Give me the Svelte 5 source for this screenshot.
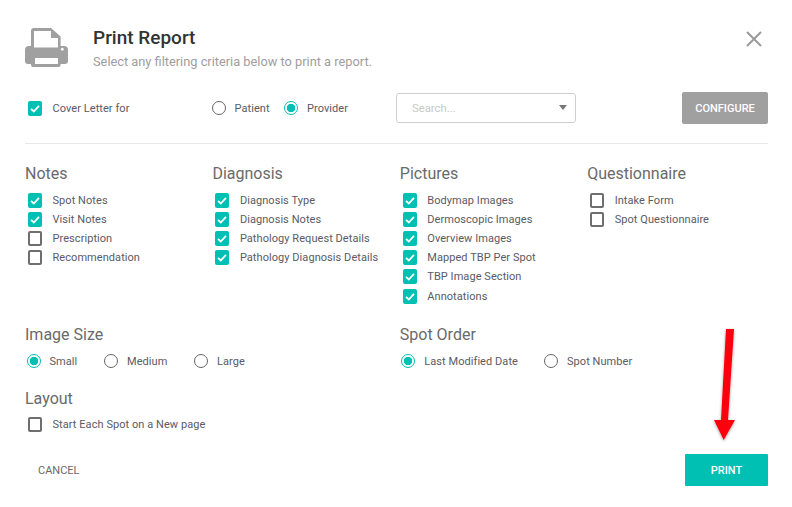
<script>
	const groups = [
		{
			title: 'Notes',
			items: [
				{ label: 'Spot Notes', on: true },
				{ label: 'Visit Notes', on: true },
				{ label: 'Prescription', on: false },
				{ label: 'Recommendation', on: false }
			]
		},
		{
			title: 'Diagnosis',
			items: [
				{ label: 'Diagnosis Type', on: true },
				{ label: 'Diagnosis Notes', on: true },
				{ label: 'Pathology Request Details', on: true },
				{ label: 'Pathology Diagnosis Details', on: true }
			]
		},
		{
			title: 'Pictures',
			items: [
				{ label: 'Bodymap Images', on: true },
				{ label: 'Dermoscopic Images', on: true },
				{ label: 'Overview Images', on: true },
				{ label: 'Mapped TBP Per Spot', on: true },
				{ label: 'TBP Image Section', on: true },
				{ label: 'Annotations', on: true }
			]
		},
		{
			title: 'Questionnaire',
			items: [
				{ label: 'Intake Form', on: false },
				{ label: 'Spot Questionnaire', on: false }
			]
		}
	];
</script>

{#snippet check(label, on)}
	<div class="check">
		<span class="box" class:on>
			{#if on}
				<svg width="14" height="15" viewBox="0 0 14 15"><path d="M3 7.800l2.800 2.700 5.200-5.600" fill="none" stroke="#fff" stroke-width="1.800" /></svg>
			{/if}
		</span>
		<span>{label}</span>
	</div>
{/snippet}

{#snippet radio(label, on, cls)}
	<div class="radio {cls}">
		<span class="dot" class:on></span>
		<span>{label}</span>
	</div>
{/snippet}

<div class="dialog">
	<header class="head">
		<svg class="printer" width="43" height="39" viewBox="0 0 43 39">
			<path fill="#a0a0a0" fill-rule="evenodd" d="M6 3a3 3 0 0 1 3-3h17l9.600 8.500V18H39a4 4 0 0 1 4 4v11a3 3 0 0 1-3 3h-4.400v1a2 2 0 0 1-2 2H8a2 2 0 0 1-2-2v-1H3a3 3 0 0 1-3-3V22a4 4 0 0 1 4-4h2zM9 3v16.500h24V10h-7V3zM10 30v6h23v-6zM37.300 19.800a1.500 1.500 0 1 0 .01 0z" />
		</svg>
		<div class="titles">
			<h1>Print Report</h1>
			<p>Select any filtering criteria below to print a report.</p>
		</div>
		<svg class="close" width="18" height="18" viewBox="0 0 18 18"><path d="M2 2l14 14M16 2L2 16" stroke="#9a9a9a" stroke-width="2" fill="none" /></svg>
	</header>

	<div class="cover">
		<div class="cover-check">{@render check('Cover Letter for', true)}</div>
		<div class="cover-radios">
			{@render radio('Patient', false, 'patient')}
			{@render radio('Provider', true, '')}
		</div>
		<div class="select">
			<span>Search...</span>
			<i class="caret"></i>
		</div>
		<button class="configure">CONFIGURE</button>
	</div>

	<div class="groups">
		{#each groups as group}
			<section>
				<h2>{group.title}</h2>
				{#each group.items as item}
					{@render check(item.label, item.on)}
				{/each}
			</section>
		{/each}
	</div>

	<div class="options">
		<section>
			<h2>Image Size</h2>
			<div class="radios">
				{@render radio('Small', true, 'small')}
				{@render radio('Medium', false, 'medium')}
				{@render radio('Large', false, '')}
			</div>
		</section>
		<section>
			<h2>Spot Order</h2>
			<div class="radios">
				{@render radio('Last Modified Date', true, 'modified')}
				{@render radio('Spot Number', false, '')}
			</div>
		</section>
	</div>

	<section class="layout">
		<h2>Layout</h2>
		{@render check('Start Each Spot on a New page', false)}
	</section>

	<footer class="foot">
		<button class="cancel">CANCEL</button>
		<button class="print">PRINT</button>
	</footer>

	<svg class="arrow" width="40" height="125" viewBox="0 0 40 125">
		<defs>
			<filter id="shadow" x="-30%" y="-10%" width="160%" height="120%">
				<feDropShadow dx="0" dy="1" stdDeviation="1.500" flood-color="#000" flood-opacity="0.4" />
			</filter>
		</defs>
		<path d="M19 4h8L21 95h7L16.700 115 7 95h7z" fill="#fc0011" filter="url(#shadow)" />
	</svg>
</div>

<style>
	:global(body) {
		margin: 0;
		background: #fff;
		font-family: Roboto, sans-serif;
		color: #5a5a64;
	}

	.dialog {
		position: relative;
		width: 792px;
		height: 507px;
		box-sizing: border-box;
		padding: 28px 24px 0 25px;
		overflow: hidden;
	}

	.head {
		display: flex;
		align-items: flex-start;
		height: 64px;
	}

	.printer {
		flex: none;
	}

	.titles {
		margin-left: 25px;
		flex: 1;
	}

	h1 {
		margin: 0;
		font-size: 19px;
		line-height: 20px;
		font-weight: 500;
		color: #333;
	}

	.titles p {
		margin: 6px 0 0;
		font-size: 12.800px;
		line-height: 16px;
		color: #9e9e9e;
	}

	.close {
		margin: 2px 4.600px 0 0;
	}

	.cover {
		display: flex;
		align-items: center;
		height: 32px;
		padding-bottom: 19px;
		border-bottom: 1px solid #e8e8e8;
	}

	.cover-check {
		width: 186.500px;
	}

	.cover-radios {
		display: flex;
		width: 184.500px;
		font-size: 11px;
	}

	.patient {
		width: 72.500px;
	}

	.select {
		box-sizing: border-box;
		display: flex;
		align-items: center;
		justify-content: space-between;
		width: 180px;
		height: 30px;
		padding: 0 8px 0 15px;
		border: 1px solid #cfcfcf;
		border-radius: 3px;
		font-size: 11.300px;
		color: #c8c8c8;
	}

	.caret {
		width: 0;
		height: 0;
		margin-bottom: 1px;
		border-left: 4.500px solid transparent;
		border-right: 4.500px solid transparent;
		border-top: 5px solid #777;
	}

	button {
		border: 0;
		padding: 0;
		font-family: inherit;
	}

	.configure {
		margin-left: auto;
		width: 86px;
		height: 32px;
		border-radius: 2px;
		background: #a0a0a0;
		color: #fff;
		font-size: 11px;
		font-weight: 500;
	}

	.check {
		display: flex;
		align-items: center;
		height: 19px;
		padding-left: 3px;
		font-size: 11px;
		letter-spacing: 0.060px;
		color: #5a5a64;
	}

	.groups .check:nth-child(7) {
		margin-top: 1px;
	}

	.box {
		box-sizing: border-box;
		flex: none;
		width: 14px;
		height: 15px;
		margin-right: 10.500px;
		border: 2px solid #6e6e6e;
		border-radius: 2px;
	}

	.box.on {
		border: 0;
		background: #00bfb3;
	}

	.box svg {
		display: block;
	}

	.radio {
		display: flex;
		align-items: center;
		font-size: 11px;
		letter-spacing: 0.060px;
	}

	.dot {
		box-sizing: border-box;
		flex: none;
		width: 14px;
		height: 14px;
		margin-right: 9px;
		border: 1.500px solid #666;
		border-radius: 50%;
	}

	.dot.on {
		border-color: #00bfb3;
		background: radial-gradient(circle, #00bfb3 0 4px, #fff 4.500px);
	}

	.groups {
		display: grid;
		grid-template-columns: repeat(3, 187.400px) 1fr;
		margin-top: 20px;
		height: 161px;
	}

	h2 {
		margin: 0 0 10px;
		font-size: 16px;
		line-height: 19px;
		font-weight: 400;
		color: #6a6a6a;
	}

	.groups h2 {
		margin-bottom: 8px;
	}

	.options {
		display: grid;
		grid-template-columns: 374.800px 1fr;
		height: 55px;
	}

	.radios {
		display: flex;
	}

	.radios .dot {
		margin-left: 1.500px;
	}

	.small {
		width: 77.500px;
	}

	.medium {
		width: 90px;
	}

	.modified {
		width: 142.700px;
	}

	.layout {
		margin-top: 9px;
	}

	.layout h2 {
		margin-bottom: 7px;
	}

	.foot {
		display: flex;
		align-items: center;
		justify-content: space-between;
		margin-top: 20px;
	}

	.cancel {
		background: none;
		padding-left: 13px;
		font-size: 11px;
		color: #6a6a6a;
	}

	.print {
		width: 83px;
		height: 32px;
		border-radius: 1px;
		background: #00bfb3;
		color: #fff;
		font-size: 11px;
		font-weight: 500;
	}

	.arrow {
		position: absolute;
		left: 707px;
		top: 325px;
	}
</style>
